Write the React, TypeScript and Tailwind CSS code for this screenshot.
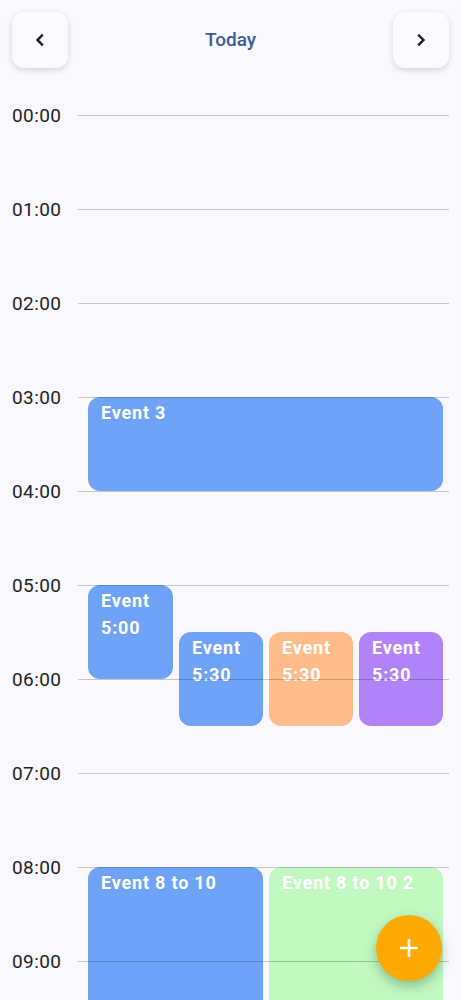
import React from "react";

const hours = ["00:00","01:00","02:00","03:00","04:00","05:00","06:00","07:00","08:00","09:00"];

type Ev = { title: React.ReactNode; top: number; height: number; left: number; width: number; color: string };

const events: Ev[] = [
  { title: "Event 3", top: 329, height: 94, left: 88, width: 355, color: "bg-[#6ea3f8]" },
  { title: <>Event<br />5:00</>, top: 517, height: 94, left: 88, width: 85, color: "bg-[#6ea3f8]" },
  { title: <>Event<br />5:30</>, top: 564, height: 94, left: 179, width: 84, color: "bg-[#6ea3f8]" },
  { title: <>Event<br />5:30</>, top: 564, height: 94, left: 269, width: 84, color: "bg-[#fdbc8a]" },
  { title: <>Event<br />5:30</>, top: 564, height: 94, left: 359, width: 84, color: "bg-[#b083f8]" },
  { title: "Event 8 to 10", top: 799, height: 188, left: 88, width: 175, color: "bg-[#6ea3f8]" },
  { title: "Event 8 to 10 2", top: 799, height: 188, left: 269, width: 174, color: "bg-[#c0f8c0]" },
];

export default function App() {
  return (
    <div
      className="relative w-full h-[1000px] overflow-hidden bg-[#f8f8fd]"
      style={{ fontFamily: "Roboto, 'Noto Sans', sans-serif" }}
    >
      <div className="flex items-center justify-between px-3 pt-3">
        <button className="w-14 h-14 rounded-[12px] bg-[#fbfbff] shadow-[0_2px_6px_rgba(0,0,0,0.15)] flex items-center justify-center">
          <svg width="14" height="14" viewBox="0 0 14 14" fill="none">
            <path d="M9 2.5 L4.5 7 L9 11.5" stroke="#1c1c1f" strokeWidth="2.4" strokeLinecap="square" />
          </svg>
        </button>
        <div className="text-[19px] font-medium text-[#3f5b95]">Today</div>
        <button className="w-14 h-14 rounded-[12px] bg-[#fbfbff] shadow-[0_2px_6px_rgba(0,0,0,0.15)] flex items-center justify-center">
          <svg width="14" height="14" viewBox="0 0 14 14" fill="none">
            <path d="M5 2.5 L9.5 7 L5 11.5" stroke="#1c1c1f" strokeWidth="2.4" strokeLinecap="square" />
          </svg>
        </button>
      </div>

      <div className="relative">
        {events.map((e, i) => (
          <div
            key={i}
            className={`absolute rounded-[12px] ${e.color} pl-[13px] pt-[2px] text-white font-bold text-[18px] tracking-[0.8px] leading-[27px] whitespace-nowrap overflow-hidden`}
            style={{ top: e.top, height: e.height, left: e.left, width: e.width }}
          >
            {e.title}
          </div>
        ))}
        <div className="relative z-10 flex flex-col">
          {hours.map((h) => (
            <div key={h} className="flex items-center h-[94px]">
              <div className="w-[78px] pl-3 pt-[2px] text-[19px] tracking-[0.4px] text-[#1f1f23]">{h}</div>
              <div className="flex-1 h-px bg-black/20 mr-3" />
            </div>
          ))}
        </div>
      </div>

      <button className="absolute z-20 right-[19px] bottom-[19px] w-[66px] h-[66px] rounded-full bg-[#ffa800] shadow-[0_5px_12px_rgba(0,0,0,0.25)] flex items-center justify-center">
        <svg width="22" height="22" viewBox="0 0 22 22" fill="none">
          <path d="M11 2 V20 M2 11 H20" stroke="white" strokeWidth="2.6" />
        </svg>
      </button>
    </div>
  );
}
